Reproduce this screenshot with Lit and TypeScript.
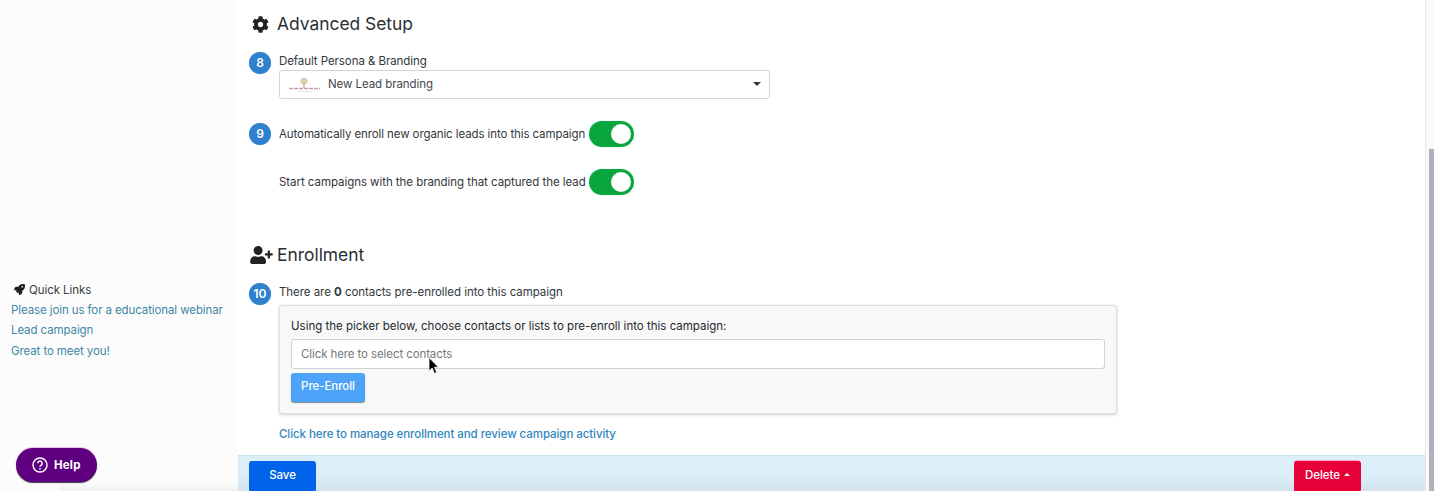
import { LitElement, html, css } from "lit";
import { customElement } from "lit/decorators.js";

const COG = "M487.4 315.7l-42.6-24.6c4.3-23.2 4.3-47 0-70.2l42.6-24.6c4.9-2.8 7.1-8.6 5.5-14-11.1-35.6-30-67.8-54.7-94.6-3.8-4.1-10-5.1-14.8-2.3L380.8 110c-17.9-15.4-38.5-27.3-60.8-35.1V25.8c0-5.6-3.9-10.5-9.4-11.7-36.7-8.2-74.3-7.8-109.2 0-5.5 1.2-9.4 6.1-9.4 11.7V75c-22.2 7.9-42.8 19.8-60.8 35.1L88.7 85.5c-4.9-2.8-11-1.9-14.8 2.3-24.7 26.7-43.6 58.9-54.7 94.6-1.7 5.4.6 11.2 5.5 14L67.3 221c-4.3 23.2-4.3 47 0 70.2l-42.6 24.6c-4.9 2.8-7.1 8.6-5.5 14 11.1 35.6 30 67.8 54.7 94.6 3.8 4.1 10 5.1 14.8 2.3l42.6-24.6c17.9 15.4 38.5 27.3 60.8 35.1v49.2c0 5.6 3.9 10.5 9.4 11.7 36.7 8.2 74.3 7.8 109.2 0 5.5-1.2 9.4-6.1 9.4-11.7v-49.2c22.2-7.9 42.8-19.8 60.8-35.1l42.6 24.6c4.9 2.8 11 1.9 14.8-2.3 24.7-26.7 43.6-58.9 54.7-94.6 1.5-5.5-.7-11.3-5.6-14.1zM256 336c-44.1 0-80-35.9-80-80s35.9-80 80-80 80 35.9 80 80-35.9 80-80 80z";
const USER_PLUS = "M624 208h-64v-64c0-8.8-7.2-16-16-16h-32c-8.8 0-16 7.2-16 16v64h-64c-8.8 0-16 7.2-16 16v32c0 8.8 7.2 16 16 16h64v64c0 8.8 7.2 16 16 16h32c8.8 0 16-7.2 16-16v-64h64c8.8 0 16-7.2 16-16v-32c0-8.8-7.2-16-16-16zm-400 48c70.7 0 128-57.3 128-128S294.7 0 224 0 96 57.3 96 128s57.3 128 128 128zm89.6 32h-16.7c-22.2 10.2-46.9 16-72.9 16s-50.6-5.8-72.9-16h-16.7C60.2 288 0 348.2 0 422.4V464c0 26.5 21.5 48 48 48h352c26.5 0 48-21.5 48-48v-41.6c0-74.2-60.2-134.4-134.4-134.4z";
const ROCKET = "M505.12 19.09c-1.19-5.53-6.66-11-12.21-12.19C460.72 0 435.51 0 410.41 0 307.2 0 245.31 55.2 199.11 128H94.91c-16.34.01-35.75 12-43.07 26.61L2.5 253.29A28 28 0 0 0 0 264a24 24 0 0 0 24 24h103.78l-22.47 22.47a32 32 0 0 0 0 45.25l50.9 50.91a32 32 0 0 0 45.26 0L224 384.15V488a24 24 0 0 0 24 24 28.11 28.11 0 0 0 10.7-2.5l98.65-49.39c14.62-7.32 26.61-26.72 26.61-43.07V312.79c72.59-46.3 128-108.4 128-211.09.1-25.2.1-50.4-6.84-82.61zM384 168a40 40 0 1 1 40-40 40 40 0 0 1-40 40z";

@customElement("app-root")
export class AppRoot extends LitElement {
  static styles = css`
    :host {
      display: block;
      width: 1434px;
      height: 491px;
      overflow: hidden;
      position: relative;
      font-family: Inter, "Liberation Sans", sans-serif;
      font-size: 11.5px;
      letter-spacing: -0.07px;
      line-height: 18px;
      color: #33373b;
      background: #fff;
    }
    * { box-sizing: border-box; }
    .page { display: flex; height: 491px; }
    .side {
      width: 238px;
      flex: none;
      background: #fcfcfc;
      padding: 279px 0 0 11px;
      position: relative;
    }
    .side::after {
      content: "";
      position: absolute;
      left: 60px;
      right: 0;
      bottom: 0;
      height: 10px;
      background: linear-gradient(#fcfcfc, #f1f2f2);
    }
    .ql-head { display: flex; align-items: center; height: 21px; color: #3a3e42; padding-left: 3px; gap: 4px; }
    .ql-head svg { width: 11px; height: 11px; fill: #1c1f22; }
    .ql a { display: block; height: 20.25px; line-height: 20.25px; color: #3f87a8; white-space: nowrap; letter-spacing: -0.1px; }
    .help {
      position: absolute;
      left: 16px;
      top: 448px;
      width: 81px;
      height: 34px;
      border-radius: 17px;
      background: #5e0080;
      box-shadow: 0 -1px 0 #f0c4ec, 0 1px 1px #3a3a3a;
      color: #fff;
      font-weight: 700;
      font-size: 11.5px;
      letter-spacing: 0.2px;
      display: flex;
      align-items: center;
      gap: 6px;
      padding-left: 16px;
      z-index: 2;
    }
    .help svg { width: 16px; height: 16px; flex: none; }
    .main { flex: 1; display: flex; flex-direction: column; min-width: 0; }
    .content { flex: 1; padding: 10px 0 0 11px; }
    .h { display: flex; align-items: center; height: 28px; font-size: 17.4px; letter-spacing: 0; color: #2b2f33; }
    .h svg { fill: #1f2326; flex: none; }
    .h.setup svg { width: 17px; height: 17px; margin: 0 8px 0 3px; }
    .h.enroll { margin-top: 46px; }
    .h.enroll svg { width: 23px; height: 18px; margin: 0 4px 0 1px; }
    .row { display: flex; margin-top: 14px; }
    .badge {
      width: 22px;
      height: 22px;
      border-radius: 50%;
      background: #2f80cd;
      color: #fff;
      font-weight: 600;
      font-size: 12px;
      letter-spacing: 0;
      line-height: 22px;
      text-align: center;
      flex: none;
      margin-right: 8px;
      box-shadow: 0 0 1px #9cc8ef;
    }
    .badge.spacer { background: none; box-shadow: none; }
    .body { width: 491px; }
    .select {
      height: 29px;
      border: 1px solid #d3d5da;
      border-radius: 3px;
      display: flex;
      align-items: center;
      padding: 0 0 2px 9px;
      color: #44484d;
      background: #fff;
    }
    .select svg.logo { width: 32px; height: 20px; margin: 2px 7px 0 0; flex: none; }
    .caret {
      margin-left: auto;
      margin-right: 8px;
      width: 0;
      height: 0;
      border-left: 4px solid transparent;
      border-right: 4px solid transparent;
      border-top: 4px solid #33373b;
    }
    .toggle-row { display: flex; align-items: center; height: 26px; margin-top: 22px; }
    .toggle-row > span:not(.toggle) { width: 307px; white-space: nowrap; }
    .toggle-row > span.tight { letter-spacing: -0.1px; }
    .toggle-row > span.loose { letter-spacing: -0.05px; }
    .toggle {
      width: 45px;
      height: 26px;
      border-radius: 13px;
      background: #09a63e;
      margin-left: 3px;
      flex: none;
      display: flex;
      justify-content: flex-end;
      align-items: center;
      padding-right: 3px;
      box-shadow: 0 0 2px #c8f0e8;
    }
    .toggle i { display: block; width: 20px; height: 20px; border-radius: 50%; background: #fff; }
    .wide { width: 838px; }
    .wide p { margin: 0; height: 22px; letter-spacing: -0.05px; }
    .panel {
      background: #f8f8f8;
      border: 1px solid #dedfe3;
      border-radius: 3px;
      box-shadow: 0 1px 3px rgba(60, 20, 60, 0.2);
      padding: 11px;
      height: 109px;
      color: #25292d;
    }
    .panel .lab { height: 18px; letter-spacing: 0; }
    .input {
      margin-top: 4px;
      height: 30px;
      border: 1px solid #ced1d6;
      border-radius: 3px;
      background: #fff;
      padding-left: 9px;
      line-height: 28px;
      color: #74787e;
      letter-spacing: -0.1px;
    }
    .pre {
      display: block;
      margin-top: 4px;
      width: 74px;
      height: 28.5px;
      border-radius: 3px;
      background: #4da3f7;
      color: #fff;
      font-weight: 500;
      line-height: 27px;
      text-align: center;
      box-shadow: 0 1px 1px #7b8794;
    }
    .manage { display: block; margin: 11px 0 0 30px; color: #2f86bd; font-weight: 450; }
    .foot {
      height: 36px;
      flex: none;
      background: linear-gradient(#dceef8 55%, #d2e3ec);
      border-top: 1px solid #c8e6ef;
      padding: 5px 64px 0 11px;
      display: flex;
      justify-content: space-between;
    }
    .btn {
      width: 67px;
      height: 31px;
      border-radius: 3px;
      color: #fff;
      font-weight: 500;
      display: flex;
      align-items: center;
      justify-content: center;
      gap: 4px;
      padding-bottom: 4px;
    }
    .save { background: #0162ea; }
    .del { background: #e80038; box-shadow: 0 -1px 0 #f7a8c8; }
    .up {
      width: 0;
      height: 0;
      border-left: 3.5px solid transparent;
      border-right: 3.5px solid transparent;
      border-bottom: 3.5px solid #fff;
    }
    .rail {
      width: 9px;
      flex: none;
      background: #fafafc;
      border-left: 1px solid #e6e6ec;
      display: flex;
      justify-content: flex-end;
    }
    .thumb { width: 5px; height: 342px; margin-top: 149px; background: #b4adbc; }
    .cursor { position: absolute; left: 428px; top: 357px; width: 12px; height: 18px; z-index: 3; }
  `;

  render() {
    return html`
      <div class="page">
        <aside class="side">
          <div class="ql">
            <div class="ql-head"><svg viewBox="0 0 512 512"><path d="${ROCKET}"></path></svg>Quick Links</div>
            <a>Please join us for a educational webinar</a>
            <a>Lead campaign</a>
            <a>Great to meet you!</a>
          </div>
          <div class="help">
            <svg viewBox="0 0 16 16" fill="none">
              <circle cx="8" cy="8" r="7" stroke="#fff" stroke-width="1.4"></circle>
              <path d="M5.8 6.3a2.2 2.2 0 1 1 3.4 1.8c-.8.5-1.2.9-1.2 1.7" stroke="#fff" stroke-width="1.4" fill="none"></path>
              <circle cx="8" cy="11.8" r=".9" fill="#fff"></circle>
            </svg>
            Help
          </div>
        </aside>
        <div class="main">
          <div class="content">
            <div class="h setup"><svg viewBox="0 0 512 512"><path d="${COG}"></path></svg>Advanced Setup</div>
            <div class="row">
              <div class="badge">8</div>
              <div class="body">
                <div>Default Persona &amp; Branding</div>
                <div class="select">
                  <svg class="logo" viewBox="0 0 32 20">
                    <circle cx="15" cy="6" r="3.6" fill="#e0cdb2"></circle>
                    <rect x="14.3" y="8" width="1.4" height="5" fill="#c7b08c"></rect>
                    <path d="M0 13.5h31" stroke="#c49bb6" stroke-width="1.4" stroke-dasharray="4 1"></path>
                    <path d="M8 16.5h15" stroke="#e6e1e6" stroke-width="1"></path>
                  </svg>
                  New Lead branding
                  <span class="caret"></span>
                </div>
              </div>
            </div>
            <div class="toggle-row">
              <div class="badge">9</div>
              <span class="tight">Automatically enroll new organic leads into this campaign</span>
              <span class="toggle"><i></i></span>
            </div>
            <div class="toggle-row">
              <div class="badge spacer"></div>
              <span class="loose">Start campaigns with the branding that captured the lead</span>
              <span class="toggle"><i></i></span>
            </div>
            <div class="h enroll"><svg viewBox="0 0 640 512"><path d="${USER_PLUS}"></path></svg>Enrollment</div>
            <div class="row">
              <div class="badge">10</div>
              <div class="wide">
                <p>There are <b>0</b> contacts pre-enrolled into this campaign</p>
                <div class="panel">
                  <div class="lab">Using the picker below, choose contacts or lists to pre-enroll into this campaign:</div>
                  <div class="input">Click here to select contacts</div>
                  <span class="pre">Pre-Enroll</span>
                </div>
              </div>
            </div>
            <a class="manage">Click here to manage enrollment and review campaign activity</a>
          </div>
          <div class="foot">
            <span class="btn save">Save</span>
            <span class="btn del">Delete <span class="up"></span></span>
          </div>
        </div>
        <div class="rail"><div class="thumb"></div></div>
      </div>
      <svg class="cursor" viewBox="0 0 12 18">
        <path d="M1 0.5V14l3.2-3 2.2 5.4 2.3-1-2.2-5.2H10.5z" fill="#000" stroke="#fff" stroke-width="0.8"></path>
      </svg>
    `;
  }
}
